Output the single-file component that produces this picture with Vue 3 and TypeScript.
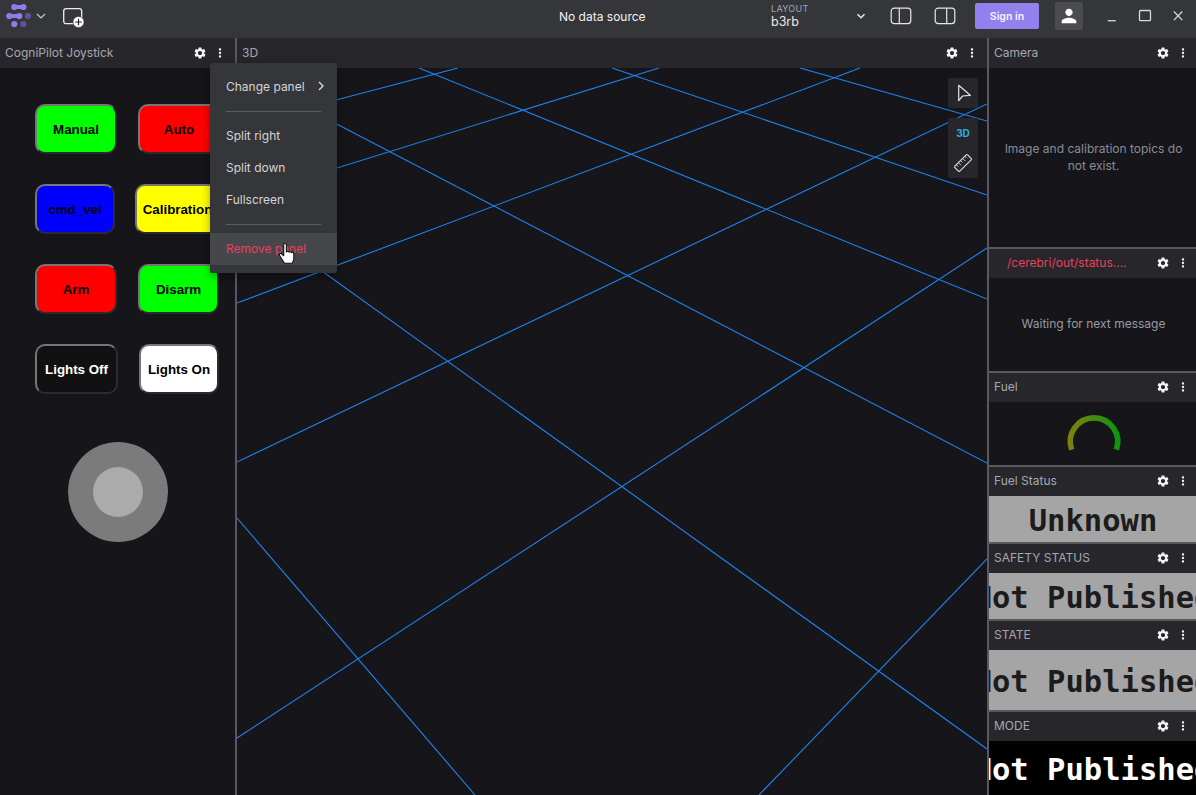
<script setup lang="ts">
  const gearPath = 'M19.14 12.94c.04-.3.06-.61.06-.94 0-.32-.02-.64-.07-.94l2.03-1.58c.18-.14.23-.41.12-.61l-1.92-3.32c-.12-.22-.37-.29-.59-.22l-2.39.96c-.5-.38-1.03-.7-1.62-.94l-.36-2.54c-.04-.24-.24-.41-.48-.41h-3.84c-.24 0-.43.17-.47.41l-.36 2.54c-.59.24-1.13.57-1.62.94l-2.39-.96c-.22-.08-.47 0-.59.22L2.74 8.87c-.12.21-.08.47.12.61l2.03 1.58c-.05.3-.09.63-.09.94s.02.64.07.94l-2.03 1.58c-.18.14-.23.41-.12.61l1.92 3.32c.12.22.37.29.59.22l2.39-.96c.5.38 1.03.7 1.62.94l.36 2.54c.05.24.24.41.48.41h3.84c.24 0 .44-.17.47-.41l.36-2.54c.59-.24 1.13-.56 1.62-.94l2.39.96c.22.08.47 0 .59-.22l1.92-3.32c.12-.22.07-.47-.12-.61l-2.01-1.58zM12 15.6c-1.98 0-3.6-1.62-3.6-3.6s1.62-3.6 3.6-3.6 3.6 1.62 3.6 3.6-1.62 3.6-3.6 3.6z';
  const dotsPath = 'M12 8c1.1 0 2-.9 2-2s-.9-2-2-2-2 .9-2 2 .9 2 2 2zm0 2c-1.1 0-2 .9-2 2s.9 2 2 2 2-.9 2-2-.9-2-2-2zm0 6c-1.1 0-2 .9-2 2s.9 2 2 2 2-.9 2-2-.9-2-2-2z';

  const buttonRows = [
    [
      { label: 'Manual', cls: 'lime', width: 82 },
      { label: 'Auto', cls: 'red', width: 82 },
    ],
    [
      { label: 'cmd_vel', cls: 'blue', width: 80 },
      { label: 'Calibration', cls: 'yellow', width: 85 },
    ],
    [
      { label: 'Arm', cls: 'red', width: 82 },
      { label: 'Disarm', cls: 'lime', width: 81 },
    ],
    [
      { label: 'Lights Off', cls: 'dark', width: 83 },
      { label: 'Lights On', cls: 'white', width: 80 },
    ],
  ];

  // grid lines of the 3D view, in the coordinates of its canvas
  const gridLines = [
    [0, 58, 221, 0],
    [0, 131, 422, 0],
    [0, 235, 623, 0],
    [0, 394, 750, 36],
    [0, 670, 750, 180],
    [522, 727, 750, 491],
    [182, 0, 750, 231],
    [375, 0, 750, 127],
    [563, 0, 750, 53],
    [0, 4, 750, 395],
    [0, 142, 750, 681],
    [0, 450, 238, 727],
  ];

  const menuItems = ['Split right', 'Split down', 'Fullscreen'];
</script>

<template>
  <div class="app">
    <header class="topbar">
      <div class="top-left">
        <svg class="logo" width="26" height="30" viewBox="0 0 26 30">
          <g fill="#8f7bee">
            <circle cx="9.300" cy="6" r="3.100" />
            <circle cx="18.400" cy="6" r="3.100" />
            <rect x="9.300" y="4" width="9.100" height="4" />
            <circle cx="4.300" cy="15" r="3.100" />
            <circle cx="14.300" cy="15" r="3.100" />
            <rect x="4.300" y="13" width="10" height="4" />
            <circle cx="9.300" cy="23" r="3.100" />
          </g>
          <g fill="#5f5399">
            <circle cx="23" cy="15" r="3.100" />
            <circle cx="18.300" cy="23" r="3.100" />
          </g>
        </svg>
        <svg class="logo-chev" width="12" height="12" viewBox="0 0 12 12">
          <path d="M2 4l4 4 4-4" fill="none" stroke="#c8c8cc" stroke-width="1.200" />
        </svg>
        <svg class="add-panel" width="24" height="24" viewBox="0 0 24 24">
          <rect x="1.700" y="4.700" width="18" height="15" rx="2.500" fill="none" stroke="#eeeeee" stroke-width="1.300" />
          <circle cx="16.500" cy="18" r="5.500" fill="#fff" stroke="#35363a" stroke-width="0.600" />
          <path d="M16.500 14.700v6.600M13.200 18h6.600" stroke="#26262a" stroke-width="1.200" />
        </svg>
      </div>
      <div class="source">No data source</div>
      <div class="top-right">
        <div class="layout-pick">
          <div class="layout-text">
            <div class="layout-label">LAYOUT</div>
            <div class="layout-name">b3rb</div>
          </div>
          <svg width="16" height="16" viewBox="0 0 16 16">
            <path d="M4.500 6.200L8 9.700l3.500-3.500" fill="none" stroke="#e8e8e8" stroke-width="1.600" />
          </svg>
        </div>
        <div class="toggles">
          <div class="icon-btn">
            <svg width="22" height="18" viewBox="0 0 22 18">
              <rect x="1.200" y="1.200" width="19.600" height="15.400" rx="3" fill="none" stroke="#e6e6e6" stroke-width="1.200" />
              <path d="M9.300 1.200v15.400" stroke="#e6e6e6" stroke-width="1.200" />
            </svg>
          </div>
          <div class="icon-btn">
            <svg width="22" height="18" viewBox="0 0 22 18">
              <rect x="1.200" y="1.200" width="19.600" height="15.400" rx="3" fill="none" stroke="#e6e6e6" stroke-width="1.200" />
              <path d="M12.700 1.200v15.400" stroke="#e6e6e6" stroke-width="1.200" />
            </svg>
          </div>
        </div>
        <div class="sign-in">Sign in</div>
        <div class="avatar">
          <svg width="22" height="22" viewBox="0 0 24 24">
            <path fill="#fff" d="M12 12c2.210 0 4-1.790 4-4s-1.790-4-4-4-4 1.790-4 4 1.790 4 4 4zm0 2c-2.670 0-8 1.340-8 4v2h16v-2c0-2.660-5.330-4-8-4z" />
          </svg>
        </div>
        <div class="win-controls">
          <div class="win-btn">
            <svg width="16" height="16" viewBox="0 0 16 16"><path d="M3.800 12.700h8" stroke="#d8d8d8" stroke-width="1.300" /></svg>
          </div>
          <div class="win-btn">
            <svg width="16" height="16" viewBox="0 0 16 16"><rect x="2.500" y="2.500" width="11" height="10.200" rx="1" fill="none" stroke="#d8d8d8" stroke-width="1.300" /></svg>
          </div>
          <div class="win-btn">
            <svg width="16" height="16" viewBox="0 0 16 16"><path d="M3.900 3.500l8.400 8.600M12.300 3.500l-8.400 8.600" stroke="#d8d8d8" stroke-width="1.300" /></svg>
          </div>
        </div>
      </div>
    </header>

    <main class="mosaic">
      <section class="panel left-col">
        <div class="toolbar">
          <span class="title">CogniPilot Joystick</span>
          <div class="tools">
            <svg class="tool" viewBox="0 0 24 24"><path :d="gearPath" /></svg>
            <svg class="tool" viewBox="0 0 24 24"><path :d="dotsPath" /></svg>
          </div>
        </div>
        <div class="joystick-body">
          <div v-for="(row, i) in buttonRows" :key="i" class="btn-row">
            <button
              v-for="b in row"
              :key="b.label"
              class="pad-btn"
              :class="b.cls"
              :style="{ width: b.width + 'px' }"
            >{{ b.label }}</button>
          </div>
          <div class="stick">
            <div class="stick-knob"></div>
          </div>
        </div>
      </section>

      <section class="panel mid-col">
        <div class="toolbar">
          <span class="title">3D</span>
          <div class="tools">
            <svg class="tool" viewBox="0 0 24 24"><path :d="gearPath" /></svg>
            <svg class="tool" viewBox="0 0 24 24"><path :d="dotsPath" /></svg>
          </div>
        </div>
        <div class="scene">
          <svg class="grid-lines" width="750" height="727" viewBox="0 0 750 727">
            <line
              v-for="(l, i) in gridLines"
              :key="i"
              :x1="l[0]"
              :y1="l[1]"
              :x2="l[2]"
              :y2="l[3]"
              stroke="#1e84ee"
              stroke-width="1.100"
            />
          </svg>
          <div class="scene-tools">
            <div class="tool-box">
              <svg width="30" height="30" viewBox="0 0 30 30">
                <path d="M10.700 7.300L22.300 17.300L14.600 18L10.700 22.700Z" fill="none" stroke="#e6e6e6" stroke-width="1.200" stroke-linejoin="round" />
              </svg>
            </div>
            <div class="tool-box">
              <div class="three-d">3D</div>
              <svg width="30" height="30" viewBox="0 0 30 30">
                <g transform="rotate(-45 15 15)" fill="none" stroke="#d8d8d8" stroke-width="1.200">
                  <rect x="6" y="11.500" width="18" height="7" rx="1" />
                  <path d="M9 11.500v2.600M12 11.500v3.600M15 11.500v2.600M18 11.500v3.600M21 11.500v2.600" stroke-width="0.900" />
                </g>
              </svg>
            </div>
          </div>
        </div>
      </section>

      <section class="right-col">
        <div class="panel">
          <div class="toolbar first">
            <span class="title">Camera</span>
            <div class="tools">
              <svg class="tool" viewBox="0 0 24 24"><path :d="gearPath" /></svg>
              <svg class="tool" viewBox="0 0 24 24"><path :d="dotsPath" /></svg>
            </div>
          </div>
          <div class="msg-body camera-msg">Image and calibration topics do not exist.</div>
        </div>
        <div class="panel">
          <div class="toolbar">
            <span class="title topic">/cerebri/out/status....</span>
            <div class="tools">
              <svg class="tool" viewBox="0 0 24 24"><path :d="gearPath" /></svg>
              <svg class="tool" viewBox="0 0 24 24"><path :d="dotsPath" /></svg>
            </div>
          </div>
          <div class="msg-body">Waiting for next message</div>
        </div>
        <div class="panel">
          <div class="toolbar">
            <span class="title">Fuel</span>
            <div class="tools">
              <svg class="tool" viewBox="0 0 24 24"><path :d="gearPath" /></svg>
              <svg class="tool" viewBox="0 0 24 24"><path :d="dotsPath" /></svg>
            </div>
          </div>
          <div class="gauge-body">
            <svg width="62" height="44" viewBox="0 0 62 44">
              <defs>
                <linearGradient id="fuelGrad" x1="0" y1="0" x2="1" y2="0">
                  <stop offset="0" stop-color="#7c8010" />
                  <stop offset="1" stop-color="#0e960e" />
                </linearGradient>
              </defs>
              <path d="M8.700 35.600A23.700 23.700 0 1 1 53.300 35.600" fill="none" stroke="url(#fuelGrad)" stroke-width="5.600" />
            </svg>
          </div>
        </div>
        <div class="panel">
          <div class="toolbar">
            <span class="title">Fuel Status</span>
            <div class="tools">
              <svg class="tool" viewBox="0 0 24 24"><path :d="gearPath" /></svg>
              <svg class="tool" viewBox="0 0 24 24"><path :d="dotsPath" /></svg>
            </div>
          </div>
          <div class="indicator">Unknown</div>
        </div>
        <div class="panel">
          <div class="toolbar">
            <span class="title">SAFETY STATUS</span>
            <div class="tools">
              <svg class="tool" viewBox="0 0 24 24"><path :d="gearPath" /></svg>
              <svg class="tool" viewBox="0 0 24 24"><path :d="dotsPath" /></svg>
            </div>
          </div>
          <div class="indicator">Not Published</div>
        </div>
        <div class="panel">
          <div class="toolbar">
            <span class="title">STATE</span>
            <div class="tools">
              <svg class="tool" viewBox="0 0 24 24"><path :d="gearPath" /></svg>
              <svg class="tool" viewBox="0 0 24 24"><path :d="dotsPath" /></svg>
            </div>
          </div>
          <div class="indicator">Not Published</div>
        </div>
        <div class="panel">
          <div class="toolbar">
            <span class="title">MODE</span>
            <div class="tools">
              <svg class="tool" viewBox="0 0 24 24"><path :d="gearPath" /></svg>
              <svg class="tool" viewBox="0 0 24 24"><path :d="dotsPath" /></svg>
            </div>
          </div>
          <div class="indicator black">Not Published</div>
        </div>
      </section>
    </main>

    <div class="menu">
      <div class="menu-item">
        <span>Change panel</span>
        <svg width="12" height="12" viewBox="0 0 12 12">
          <path d="M4 2l4 4-4 4" fill="none" stroke="#d8d8dc" stroke-width="1.400" />
        </svg>
      </div>
      <div class="menu-div"></div>
      <div v-for="m in menuItems" :key="m" class="menu-item">{{ m }}</div>
      <div class="menu-div"></div>
      <div class="menu-item danger">Remove panel</div>
    </div>

    <svg class="hand" width="24" height="24" viewBox="0 0 20 20">
      <path
        d="M5.600 2.200c0-1.300 2.200-1.300 2.200 0v6.200c.3-1 2.100-1 2.200.2.400-.9 2-.8 2.100.4.500-.7 1.900-.5 1.900.7v4.200c0 1.600-.9 2.800-1.400 3.800H6.200L2.200 11.300c-.8-1 .4-2.300 1.500-1.500l1.900 1.700z"
        fill="#fff"
        stroke="#111"
        stroke-width="0.900"
        stroke-linejoin="round"
      />
    </svg>
  </div>
</template>

<style>
  html, body {
    margin: 0;
    background: #15151a;
  }
</style>

<style scoped>
  .app {
    width: 1196px;
    height: 795px;
    display: flex;
    flex-direction: column;
    overflow: hidden;
    position: relative;
    font-family: Inter, "Open Sans", sans-serif;
    font-size: 12px;
    color: #a7a6af;
  }

  .topbar {
    height: 38px;
    box-sizing: border-box;
    padding-bottom: 6px;
    flex: none;
    display: flex;
    align-items: center;
    background: #35363a;
  }

  .top-left {
    width: 559px;
    display: flex;
    align-items: center;
    padding-left: 5px;
    box-sizing: border-box;
  }

  .logo-chev {
    margin-left: 4px;
  }

  .add-panel {
    margin-left: 15px;
  }

  .source {
    color: #f2f2ee;
    font-size: 12px;
  }

  .top-right {
    margin-left: auto;
    width: 425px;
    display: flex;
    align-items: center;
  }

  .layout-pick {
    width: 98px;
    display: flex;
    align-items: center;
    justify-content: space-between;
  }

  .layout-label {
    font-size: 9px;
    line-height: 11px;
    letter-spacing: 0.3px;
    color: #a7a6af;
  }

  .layout-name {
    font-size: 12.500px;
    line-height: 15px;
    color: #e8e8e8;
  }

  .toggles {
    margin-left: 10px;
    display: flex;
  }

  .icon-btn {
    width: 44px;
    display: flex;
    justify-content: center;
  }

  .sign-in {
    margin-left: 8px;
    width: 64px;
    height: 26px;
    border-radius: 2px;
    background: #9480ed;
    color: #f4f2fd;
    font-size: 10.500px;
    font-weight: 600;
    display: flex;
    align-items: center;
    justify-content: center;
  }

  .avatar {
    margin-left: 16px;
    width: 28px;
    height: 28px;
    border-radius: 2px;
    background: #4b4c50;
    display: flex;
    align-items: center;
    justify-content: center;
  }

  .win-controls {
    margin-left: 12px;
    display: flex;
  }

  .win-btn {
    width: 33px;
    display: flex;
    justify-content: center;
  }

  .mosaic {
    flex: 1;
    min-height: 0;
    display: grid;
    grid-template-columns: 235px 750px 207px;
    column-gap: 2px;
    background: #58585e;
  }

  .panel {
    display: flex;
    flex-direction: column;
    min-width: 0;
    min-height: 0;
    background: #15151a;
  }

  .toolbar {
    height: 30px;
    box-sizing: border-box;
    flex: none;
    display: flex;
    align-items: center;
    justify-content: space-between;
    padding: 0 5px;
    background: #27272b;
  }

  .title {
    white-space: nowrap;
    color: #a7a6af;
    padding-bottom: 1px;
  }

  .topic {
    color: #e8405f;
    padding-left: 13px;
  }

  .tools {
    display: flex;
    align-items: center;
  }

  .tool {
    width: 14px;
    height: 14px;
    padding: 0 3px;
    fill: #f4f4f4;
  }

  .right-col {
    display: grid;
    grid-template-rows: 209px 122px 92px 75px 75px 89px 83px;
    row-gap: 2px;
    min-height: 0;
  }

  .right-col .toolbar {
    height: 29px;
    padding: 0 3px 2px 5px;
  }

  .right-col .toolbar.first {
    height: 30px;
    padding-bottom: 0;
  }

  .joystick-body {
    flex: 1;
    padding: 36px 0 0 35px;
    display: flex;
    flex-direction: column;
  }

  .btn-row {
    display: flex;
    column-gap: 21px;
    margin-bottom: 30px;
  }

  .btn-row:nth-child(2) {
    column-gap: 20px;
  }

  .pad-btn {
    height: 50px;
    padding: 0;
    box-sizing: border-box;
    border-width: 2px;
    border-style: solid;
    border-color: #767676 #2b2b30 #2b2b30 #767676;
    border-radius: 10px;
    font-family: "Liberation Sans", Arial, sans-serif;
    font-size: 13.333px;
    font-weight: 700;
    color: #000;
  }

  .lime { background: #00ff00; }
  .red { background: #ff0000; }
  .blue { background: #0000ff; }
  .yellow { background: #ffff00; }
  .white { background: #ffffff; }
  .dark {
    background: #111111;
    color: #ffffff;
  }

  .stick {
    width: 100px;
    height: 100px;
    margin: 18px 0 0 33px;
    border-radius: 50%;
    background: #7b7b7b;
    display: flex;
    align-items: center;
    justify-content: center;
  }

  .stick-knob {
    width: 50px;
    height: 50px;
    border-radius: 50%;
    background: #ababab;
  }

  .scene {
    flex: 1;
    position: relative;
    overflow: hidden;
  }

  .grid-lines {
    position: absolute;
    left: 0;
    top: 0;
  }

  .scene-tools {
    position: absolute;
    top: 10px;
    right: 9px;
    display: flex;
    flex-direction: column;
    row-gap: 10px;
  }

  .tool-box {
    width: 30px;
    background: #27272b;
    border-radius: 2px;
    display: flex;
    flex-direction: column;
  }

  .tool-box svg {
    display: block;
  }

  .three-d {
    height: 30px;
    display: flex;
    align-items: center;
    justify-content: center;
    font-size: 10px;
    font-weight: 700;
    color: #2bafdc;
  }

  .msg-body {
    flex: 1;
    display: flex;
    align-items: center;
    justify-content: center;
    text-align: center;
    color: #9a9aa2;
    line-height: 17px;
    padding: 0 9px 2px 11px;
  }

  .camera-msg {
    color: #8a8c94;
  }

  .gauge-body {
    flex: 1;
    display: flex;
    justify-content: center;
    padding: 12px 0 0 2px;
  }

  .indicator {
    flex: 1;
    min-height: 0;
    overflow: hidden;
    display: flex;
    align-items: center;
    justify-content: center;
    white-space: nowrap;
    background: #a5a5a5;
    color: #1c1c1c;
    box-sizing: border-box;
    padding: 2px 0 0 1px;
    font-family: "DejaVu Sans Mono", "Liberation Mono", monospace;
    font-size: 30.500px;
    font-weight: 700;
  }

  .indicator.black {
    background: #000;
    color: #fff;
  }

  .menu {
    position: absolute;
    left: 210px;
    top: 63px;
    width: 127px;
    padding: 8px 0;
    background: #35363a;
    border-radius: 2px;
    box-shadow: 0 3px 10px rgba(0, 0, 0, 0.35);
    color: #d4d4d8;
  }

  .menu-item {
    height: 32px;
    box-sizing: border-box;
    padding: 0 10px 2px 16px;
    display: flex;
    align-items: center;
    justify-content: space-between;
    white-space: nowrap;
  }

  .menu-div {
    height: 1px;
    margin: 8px 16px;
    background: #5a5a5f;
  }

  .danger {
    background: #46474b;
    color: #e8405f;
  }

  .hand {
    position: absolute;
    left: 277px;
    top: 242px;
  }
</style>
